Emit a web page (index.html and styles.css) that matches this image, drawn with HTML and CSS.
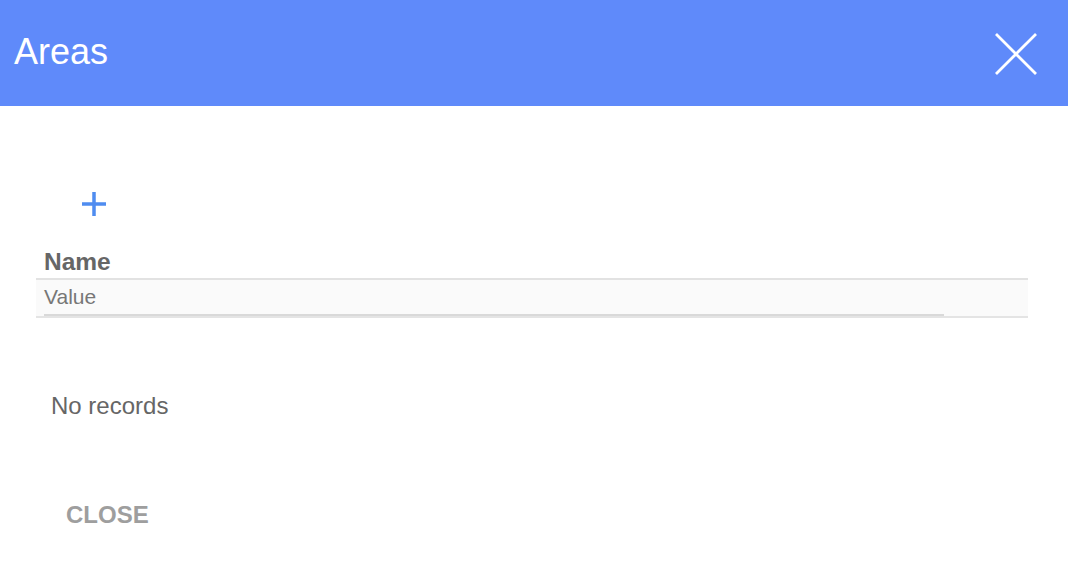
FILE: index.html
```html
<!DOCTYPE html>
<html>
<head>
<meta charset="utf-8">
<link rel="stylesheet" href="styles.css">
</head>
<body>
<div class="dialog">
  <header class="dialog-header">
    <h1 class="dialog-title">Areas</h1>
    <button class="icon-btn close-x" aria-label="Close">
      <svg width="42" height="42" viewBox="0 0 42 42"><path d="M1 1 L41 41 M41 1 L1 41" stroke="#fff" stroke-width="2.8" fill="none"/></svg>
    </button>
  </header>
  <main class="dialog-body">
    <div class="add-row">
      <button class="icon-btn add-btn" aria-label="Add">
        <svg width="24" height="24" viewBox="0 0 24 24"><path d="M12 0 V24 M0 12 H24" stroke="#4f8cf0" stroke-width="3.5" fill="none"/></svg>
      </button>
    </div>
    <div class="table">
      <div class="table-head">Name</div>
      <div class="table-filter">
        <div class="filter-field">Value</div>
      </div>
    </div>
    <p class="empty">No records</p>
    <div class="actions">
      <button class="text-btn">CLOSE</button>
    </div>
  </main>
</div>
</body>
</html>
```
FILE: styles.css
```css
html, body {
  margin: 0;
  padding: 0;
  background: #fff;
  font-family: "Liberation Sans", Arial, sans-serif;
}
.dialog {
  width: 1068px;
}
.dialog-header {
  height: 106px;
  background: #5f8afa;
  display: flex;
  align-items: center;
  justify-content: space-between;
  padding: 0 31px 0 14px;
  box-sizing: border-box;
}
.dialog-title {
  margin: 0;
  color: #fff;
  font-size: 36px;
  font-weight: normal;
  line-height: 36px;
  padding-bottom: 2px;
}
.icon-btn {
  border: 0;
  background: none;
  padding: 0;
  margin: 0;
  display: block;
}
.icon-btn svg {
  display: block;
}
.close-x {
  margin-top: 1px;
}
.dialog-body {
  padding: 0 40px 0 36px;
}
.add-row {
  padding: 86px 0 0 46px;
}
.table {
  margin-top: 32px;
}
.table-head {
  font-size: 24.5px;
  font-weight: bold;
  color: #666;
  line-height: 28px;
  padding: 0 0 2px 8px;
  border-bottom: 2px solid #e2e2e2;
}
.table-filter {
  background: #fafafa;
  border-bottom: 2px solid #e4e4e4;
}
.filter-field {
  width: 900px;
  margin-left: 8px;
  height: 36px;
  box-sizing: border-box;
  padding-top: 5px;
  font-size: 21px;
  line-height: 23px;
  color: #777;
  border-bottom: 2px solid #d9d9d9;
}
.empty {
  margin: 74px 0 0 0;
  padding-left: 15px;
  font-size: 24px;
  line-height: 28px;
  color: #666;
}
.actions {
  margin-top: 81px;
  padding-left: 30px;
}
.text-btn {
  border: 0;
  background: none;
  padding: 0;
  font-family: "Liberation Sans", Arial, sans-serif;
  font-size: 24px;
  font-weight: bold;
  line-height: 28px;
  color: #9e9e9e;
}
```
